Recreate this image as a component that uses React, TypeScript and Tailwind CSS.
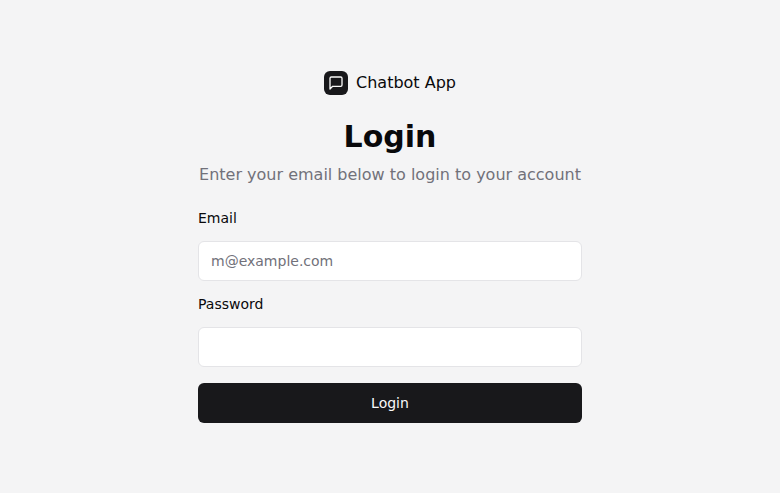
import React from 'react';

interface FieldProps {
  id: string;
  label: string;
  type: string;
  placeholder?: string;
}

function MessageIcon() {
  return (
    <svg
      className="size-4"
      viewBox="0 0 24 24"
      fill="none"
      stroke="currentColor"
      strokeWidth="2"
      strokeLinecap="round"
      strokeLinejoin="round"
      aria-hidden="true"
    >
      <path d="M21 15a2 2 0 0 1-2 2H7l-4 4V5a2 2 0 0 1 2-2h14a2 2 0 0 1 2 2z" />
    </svg>
  );
}

function Field({ id, label, type, placeholder }: FieldProps) {
  return (
    <div className="grid gap-4">
      <label htmlFor={id} className="text-sm leading-none font-medium">
        {label}
      </label>
      <input
        id={id}
        type={type}
        placeholder={placeholder}
        className="h-10 w-full rounded-md border border-[#e4e4e7] bg-white px-3 py-2 text-sm placeholder:text-[#71717a]"
      />
    </div>
  );
}

export default function App() {
  return (
    <main className="flex min-h-screen flex-col items-center justify-center bg-[#f4f4f5] font-['DejaVu_Sans',sans-serif] text-[#09090b]">
      <div className="flex w-96 flex-col gap-6">
        <div className="flex items-center justify-center gap-2 font-medium">
          <div className="flex size-6 items-center justify-center rounded-md bg-[#18181b] text-[#fafafa]">
            <MessageIcon />
          </div>
          Chatbot App
        </div>
        <form className="flex flex-col gap-6" onSubmit={(e) => e.preventDefault()}>
          <div className="grid gap-2 text-center">
            <h1 className="text-3xl font-bold">Login</h1>
            <p className="whitespace-nowrap text-[#71717a]">Enter your email below to login to your account</p>
          </div>
          <div className="grid gap-4">
            <Field id="email" label="Email" type="email" placeholder="m@example.com" />
            <Field id="password" label="Password" type="password" />
            <button type="submit" className="h-10 rounded-md bg-[#18181b] text-sm font-medium text-[#fafafa]">
              Login
            </button>
          </div>
        </form>
      </div>
    </main>
  );
}
